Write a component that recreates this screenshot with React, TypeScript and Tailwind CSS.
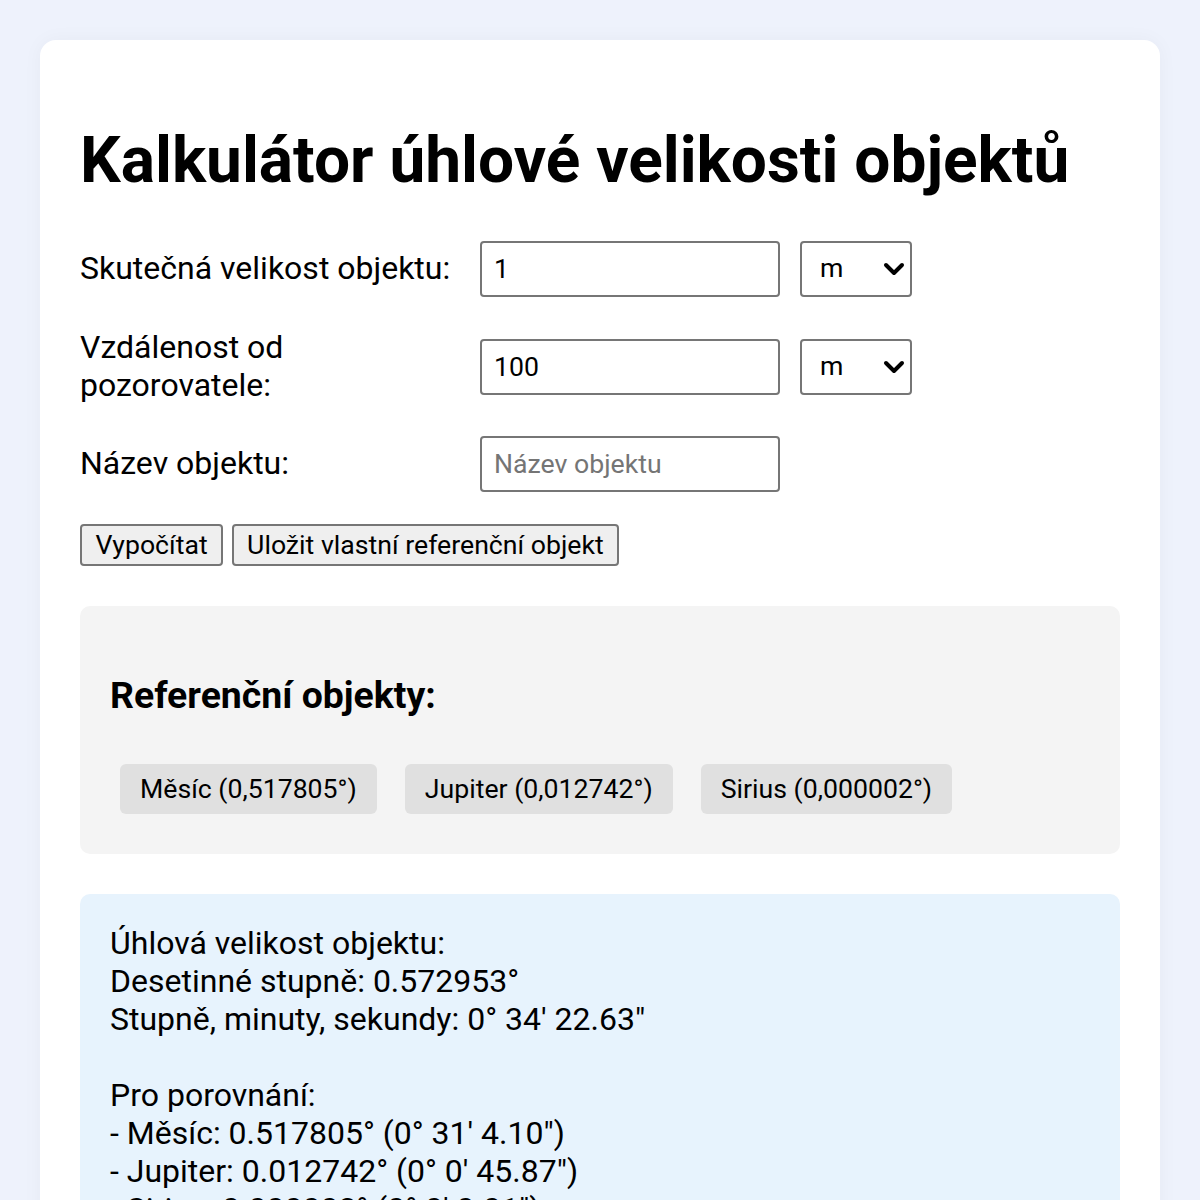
import React, { useState } from 'react';

const refs = [
  { name: 'Měsíc', deg: '0,517805' },
  { name: 'Jupiter', deg: '0,012742' },
  { name: 'Sirius', deg: '0,000002' },
];

function UnitSelect({ value, onChange }: { value: string; onChange: (v: string) => void }) {
  return (
    <div className="relative w-[112px] h-[56px]">
      <select
        value={value}
        onChange={e => onChange(e.target.value)}
        className="appearance-none w-full h-full border-2 border-[#767676] rounded-[4px] bg-white pl-[18px] text-[26.67px] text-black outline-none"
      >
        <option value="m">m</option>
        <option value="km">km</option>
        <option value="au">AU</option>
        <option value="ly">ly</option>
      </select>
      <svg className="absolute right-[7px] top-[21px] w-[22px] h-[14px] pointer-events-none" viewBox="0 0 22 14">
        <path d="M3 3 L11 11 L19 3" fill="none" stroke="#000" strokeWidth="4" strokeLinecap="round" strokeLinejoin="round" />
      </svg>
    </div>
  );
}

export default function App() {
  const [size, setSize] = useState('1');
  const [dist, setDist] = useState('100');
  const [name, setName] = useState('');
  const [sizeUnit, setSizeUnit] = useState('m');
  const [distUnit, setDistUnit] = useState('m');

  const inputCls =
    'w-[300px] h-[56px] border-2 border-[#767676] rounded-[4px] px-[12px] text-[26.67px] text-black outline-none placeholder:text-[#757575] bg-white';

  return (
    <div className="min-h-screen bg-[#eef2fc] p-[40px] font-['Roboto',sans-serif] text-black">
      <div className="bg-white rounded-[16px] shadow-[0_0_20px_rgba(0,0,0,0.04)] p-[40px]">
        <h1 className="text-[64px] font-bold leading-[75px] my-[43px]">Kalkulátor úhlové velikosti objektů</h1>

        <div className="flex flex-col gap-[32px] text-[32px] leading-[37.5px]">
          <div className="flex items-center">
            <label className="w-[400px]">Skutečná velikost objektu:</label>
            <input value={size} onChange={e => setSize(e.target.value)} className={inputCls} />
            <div className="ml-[20px]">
              <UnitSelect value={sizeUnit} onChange={setSizeUnit} />
            </div>
          </div>
          <div className="flex items-center">
            <label className="w-[400px] pr-[120px]">Vzdálenost od pozorovatele:</label>
            <input value={dist} onChange={e => setDist(e.target.value)} className={inputCls} />
            <div className="ml-[20px]">
              <UnitSelect value={distUnit} onChange={setDistUnit} />
            </div>
          </div>
          <div className="flex items-center">
            <label className="w-[400px]">Název objektu:</label>
            <input value={name} onChange={e => setName(e.target.value)} placeholder="Název objektu" className={inputCls} />
          </div>
        </div>

        <div className="flex gap-[9px] mt-[32px] text-[26.67px] leading-[31px]">
          <button className="h-[42px] px-[13.5px] border-2 border-[#767676] rounded-[4px] bg-[#efefef]">Vypočítat</button>
          <button className="h-[42px] px-[13px] border-2 border-[#767676] rounded-[4px] bg-[#efefef]">Uložit vlastní referenční objekt</button>
        </div>

        <div className="mt-[40px] bg-[#f4f4f4] rounded-[10px] p-[30px]">
          <h3 className="text-[37.4px] font-bold leading-[44px] my-[37px]">Referenční objekty:</h3>
          <div className="flex gap-[28px] px-[10px] py-[10px] text-[26.67px] leading-[31px]">
            {refs.map(r => (
              <button key={r.name} className="bg-[#e0e0e0] rounded-[6px] px-[20px] py-[9.5px]">
                {r.name} ({r.deg}°)
              </button>
            ))}
          </div>
        </div>

        <div className="mt-[40px] bg-[#e7f3fd] rounded-[10px] p-[30px] text-[32px] leading-[38px] whitespace-pre-line">
          {`Úhlová velikost objektu:
Desetinné stupně: 0.572953°
Stupně, minuty, sekundy: 0° 34' 22.63"

Pro porovnání:
- Měsíc: 0.517805° (0° 31' 4.10")
- Jupiter: 0.012742° (0° 0' 45.87")
- Sirius: 0.000002° (0° 0' 0.01")`}
        </div>
      </div>
    </div>
  );
}
